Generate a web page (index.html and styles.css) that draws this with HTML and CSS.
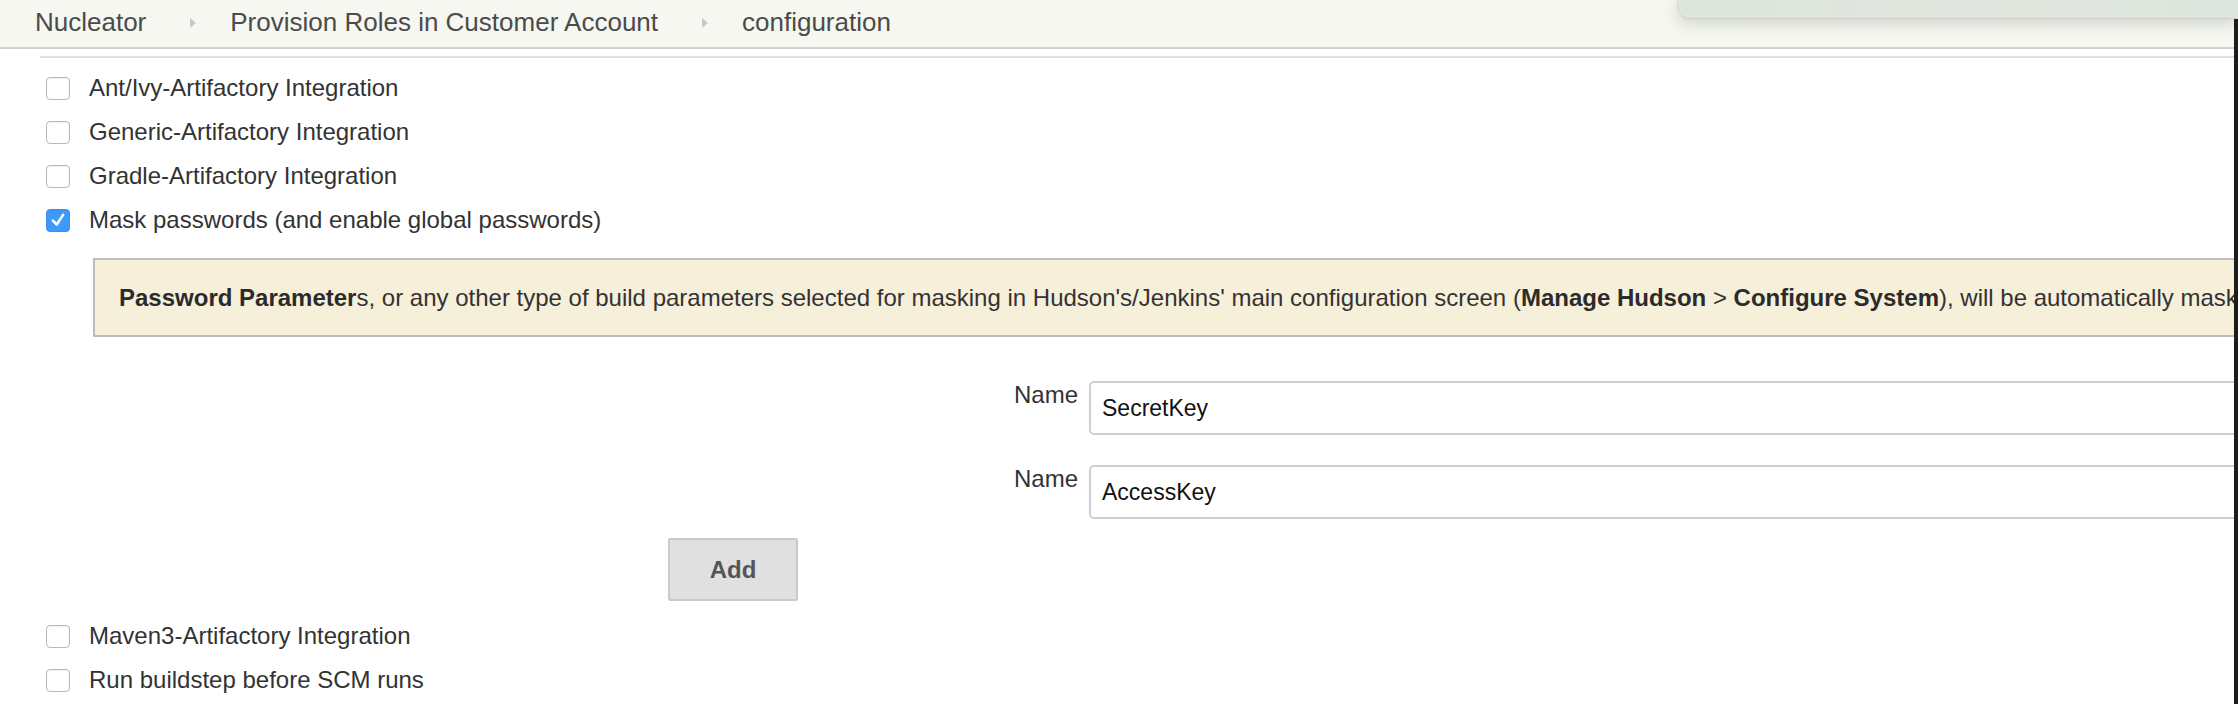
FILE: index.html
```html
<!DOCTYPE html>
<html lang="en">
<head>
<meta charset="utf-8">
<title>configuration</title>
<link rel="stylesheet" href="styles.css">
</head>
<body>
<div class="app">
  <div class="page">
    <header class="breadcrumbs">
      <span class="crumb">Nucleator</span>
      <svg class="sep" viewBox="0 0 6 10"><polygon points="0,0 6,5 0,10" /></svg>
      <span class="crumb">Provision Roles in Customer Account</span>
      <svg class="sep" viewBox="0 0 6 10"><polygon points="0,0 6,5 0,10" /></svg>
      <span class="crumb">configuration</span>
    </header>
    <main class="config">
      <div class="opt"><span class="cb"></span>Ant/Ivy-Artifactory Integration</div>
      <div class="opt"><span class="cb"></span>Generic-Artifactory Integration</div>
      <div class="opt"><span class="cb"></span>Gradle-Artifactory Integration</div>
      <div class="opt"><span class="cb checked"><svg viewBox="0 0 14 14"><polyline points="3,7.5 6,10.5 11,3" /></svg></span>Mask passwords (and enable global passwords)</div>
      <div class="help"><b>Password Parameter</b>s, or any other type of build parameters selected for masking in Hudson's/Jenkins' main configuration screen (<b>Manage Hudson</b>&nbsp;&gt;&nbsp;<b>Configure System</b>), will be automatically masked.</div>
      <div class="params">
        <div class="param"><span class="pname">Name</span><input class="ptext" type="text" value="SecretKey"></div>
        <div class="param"><span class="pname">Name</span><input class="ptext" type="text" value="AccessKey"></div>
      </div>
      <div class="actions"><button class="btn" type="button">Add</button></div>
      <div class="more">
        <div class="opt"><span class="cb"></span>Maven3-Artifactory Integration</div>
        <div class="opt"><span class="cb"></span>Run buildstep before SCM runs</div>
      </div>
    </main>
  </div>
  <div class="edge"></div>
  <div class="popup"></div>
</div>
</body>
</html>
```
FILE: styles.css
```css
html, body {
  margin: 0;
  padding: 0;
}
body {
  font-family: "Liberation Sans", Arial, Helvetica, sans-serif;
  background: #fff;
  overflow: hidden;
}
.app {
  position: relative;
  display: flex;
  height: 704px;
}
.page {
  flex: 1;
  min-width: 0;
  overflow: hidden;
}
.edge {
  width: 4px;
  background: #1d1d1b;
}
.popup {
  position: absolute;
  top: 0;
  right: 0;
  width: 560px;
  height: 18px;
  background: linear-gradient(90deg, #dbe6dc, #e2e5df 50%, #dce6dd);
  border-bottom: 1px solid #cdd3cb;
  border-left: 1px solid #d3d9d1;
  border-bottom-left-radius: 12px;
  box-shadow: 0 4px 16px rgba(0, 0, 0, 0.16);
}

.breadcrumbs {
  height: 45px;
  padding: 0 0 2px 35px;
  display: flex;
  align-items: center;
  background: #f5f7f0;
  border-bottom: 2px solid #d2d4cb;
  font-size: 26px;
  color: #4b4b4b;
  white-space: nowrap;
}
.sep {
  width: 6px;
  height: 10px;
  margin: 0 34px 0 44px;
  fill: #c9c9c9;
}

.config {
  margin: 7px 0 0 40px;
  border-top: 2px solid #e0e0e0;
  padding-top: 8px;
}
.opt {
  display: flex;
  align-items: center;
  height: 44px;
  padding-left: 6px;
  font-size: 24px;
  color: #333;
  white-space: nowrap;
}
.cb {
  width: 24px;
  height: 23px;
  box-sizing: border-box;
  border: 1px solid #b8b8b8;
  border-radius: 4px;
  background: #fff;
  margin-right: 19px;
  box-shadow: inset 0 1px 1px rgba(0, 0, 0, 0.04);
  flex: none;
}
.cb.checked {
  background: #3d99fb;
  border-color: #3a8ff0;
  display: flex;
  align-items: center;
  justify-content: center;
}
.cb.checked svg {
  width: 18px;
  height: 18px;
  fill: none;
  stroke: #fff;
  stroke-width: 2;
  stroke-linecap: round;
  stroke-linejoin: round;
}

.help {
  margin: 16px -20px 0 53px;
  height: 75px;
  border: 2px solid #bdbdbd;
  background: #f6efda;
  display: flex;
  align-items: center;
  padding-left: 24px;
  font-size: 24px;
  color: #333;
  white-space: nowrap;
}
.help b {
  color: #2b2b2b;
}

.params {
  margin-top: 44px;
  display: flex;
  flex-direction: column;
  gap: 30px;
}
.param {
  display: grid;
  grid-template-columns: 1049px 1fr;
  margin-right: -20px;
}
.pname {
  text-align: right;
  padding: 0 11px 0 0;
  font-size: 24px;
  color: #333;
}
.ptext {
  height: 54px;
  box-sizing: border-box;
  border: 2px solid #cfcfcf;
  border-radius: 5px;
  padding: 0 11px;
  font: 23px "Liberation Sans", Arial, sans-serif;
  color: #111;
  background: #fff;
  outline: none;
}

.actions {
  margin-top: 19px;
  padding-left: 628px;
}
.btn {
  width: 130px;
  height: 63px;
  background: #e0e0e0;
  border: 2px solid #cacaca;
  border-radius: 2px;
  font: bold 24px "Liberation Sans", Arial, sans-serif;
  color: #555;
  padding: 0;
}
.more {
  margin-top: 13px;
}
```
